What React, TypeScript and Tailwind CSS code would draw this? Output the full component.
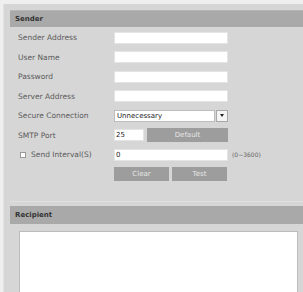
import React from "react";

const font = { fontFamily: '"DejaVu Sans", "Liberation Sans", sans-serif' };

const Row = ({ label, children }: { label: React.ReactNode; children: React.ReactNode }) => (
  <div className="flex h-[19.5px] items-center">
    <div className="w-[96px] shrink-0 text-[7.5px] text-[#5a5a5a]">{label}</div>
    <div className="flex items-center">{children}</div>
  </div>
);

const Field = ({ value = "", w = "w-[114px]" }: { value?: string; w?: string }) => (
  <div className={`${w} flex h-[12px] items-center bg-white px-[2px] text-[7px] text-[#222] shadow-[inset_0_0_0_1px_#e4e4e4]`}>
    {value}
  </div>
);

const Btn = ({ label, w }: { label: string; w: string }) => (
  <div className={`${w} flex h-[14px] items-center justify-center bg-[#9d9d9d] text-[7px] text-[#e6e6e6]`}>
    {label}
  </div>
);

export default function App() {
  return (
    <div style={font} className="h-[292px] w-[303px] overflow-hidden bg-[#efefef] pl-[3px] pt-[4px]">
      <div className="h-full border-l border-[#e2e2e2] bg-[#d6d6d6] pl-[6px] pt-[6px]">
        <div className="flex h-[17px] items-center border-t border-[#b6b6b6] bg-[#a9a9a9] pl-[5px] text-[7px] font-bold text-[#333]">
          Sender
        </div>
        <div className="pl-[8px] pt-[1px]">
          <Row label="Sender Address"><Field /></Row>
          <Row label="User Name"><Field /></Row>
          <Row label="Password"><Field /></Row>
          <Row label="Server Address"><Field /></Row>
          <Row label="Secure Connection">
            <div className="flex h-[12px] w-[114px] items-center gap-[1px]">
              <div className="flex h-full flex-1 items-center bg-white pl-[3px] text-[7px] text-[#222] shadow-[inset_0_0_0_1px_#bdbdbd]">
                Unnecessary
              </div>
              <div className="flex h-full w-[12px] items-center justify-center bg-[#f4f4f4] shadow-[inset_0_0_0_1px_#a8a8a8]">
                <div className="h-0 w-0 border-x-[2.5px] border-t-[3px] border-x-transparent border-t-[#222]" />
              </div>
            </div>
          </Row>
          <Row label="SMTP Port">
            <div className="flex items-center gap-[3px]">
              <Field value="25" w="w-[30px]" />
              <Btn label="Default" w="w-[81px]" />
            </div>
          </Row>
          <div className="flex h-[19.5px] items-center">
            <div className="flex w-[96px] shrink-0 items-center gap-[5px] pl-[2px] text-[7.5px] text-[#5a5a5a]">
              <div className="h-[6px] w-[6px] border border-[#9a9a9a] bg-white" />
              <span>Send Interval(S)</span>
            </div>
            <Field value="0" />
            <span className="ml-[4px] text-[6px] text-[#666]">(0~3600)</span>
          </div>
          <div className="flex h-[19.5px] items-center">
            <div className="w-[96px] shrink-0" />
            <div className="flex gap-[3px]">
              <Btn label="Clear" w="w-[55px]" />
              <Btn label="Test" w="w-[55px]" />
            </div>
          </div>
        </div>
        <div className="mt-[17px] border-t border-[#e0e0e0] pt-[4px]">
          <div className="flex h-[18px] items-center bg-[#a9a9a9] pl-[5px] text-[7px] font-bold text-[#333]">
            Recipient
          </div>
          <div className="mt-[7px] flex pl-[9px] pr-[5px]">
            <div className="h-[70px] flex-1 border border-[#bcbcbc] bg-white" />
          </div>
        </div>
      </div>
    </div>
  );
}
